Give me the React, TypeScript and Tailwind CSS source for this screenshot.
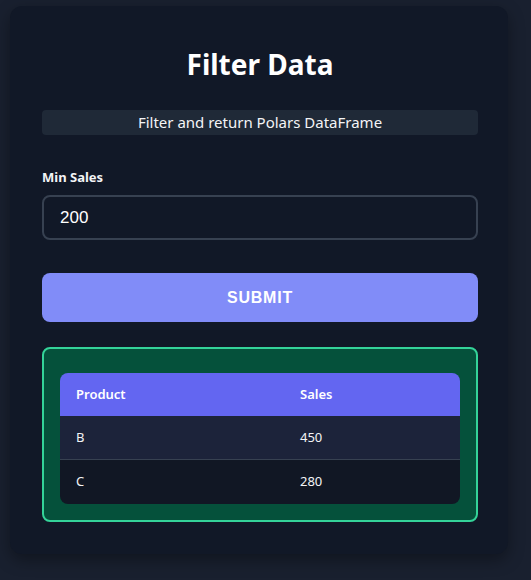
import React from "react";

const rows = [
    { product: "B", sales: 450 },
    { product: "C", sales: 280 },
];

export default function App() {
    return (
        <div className="min-h-screen bg-[#19202f] pt-[6px] pl-[10px]" style={{ fontFamily: '"Noto Sans", "Open Sans", sans-serif' }}>
            <div className="w-[498px] rounded-xl bg-[#111827] pl-8 pr-[30px] pt-[38px] pb-8 shadow-[0_6px_16px_rgba(0,0,0,0.35)]">
                <h1 className="text-center text-[28px] leading-[40px] font-bold text-white">Filter Data</h1>

                <p className="mt-[26px] rounded bg-[#1f2937] py-[2px] text-center text-[15px] leading-[21px] text-gray-100">
                    Filter and return Polars DataFrame
                </p>

                <label className="mt-[33px] block text-[13px] leading-[18px] font-bold text-gray-100">Min Sales</label>
                <div className="mt-[9px] flex h-[45px] items-center rounded-lg border-2 border-[#374151] px-4">
                    <span className="text-[17px] text-white" style={{ fontFamily: '"Liberation Sans", Arial, sans-serif' }}>200</span>
                </div>

                <button
                    className="mt-[33px] flex h-[49px] w-full items-center justify-center rounded-lg bg-[#818cf8] text-[16px] font-bold tracking-wider text-white"
                    style={{ fontFamily: '"Liberation Sans", Arial, sans-serif' }}
                >
                    SUBMIT
                </button>

                <div className="mt-[25px] rounded-lg border-2 border-[#34d399] bg-[#05513b] px-4 pt-6 pb-4">
                    <div className="overflow-hidden rounded-lg">
                        <div className="flex h-[43px] items-center bg-[#6366f1] text-[13px] font-semibold text-white">
                            <div className="w-[224px] pl-4">Product</div>
                            <div className="pl-4">Sales</div>
                        </div>
                        {rows.map((r, i) => (
                            <div
                                key={r.product}
                                className={
                                    i === 0
                                        ? "flex h-[44px] items-center border-b border-[#374151] bg-[#1c233a] text-[13px] text-gray-100"
                                        : "flex h-[44px] items-center bg-[#111724] text-[13px] text-gray-100"
                                }
                            >
                                <div className="w-[224px] pl-4">{r.product}</div>
                                <div className="pl-4">{r.sales}</div>
                            </div>
                        ))}
                    </div>
                </div>
            </div>
        </div>
    );
}
